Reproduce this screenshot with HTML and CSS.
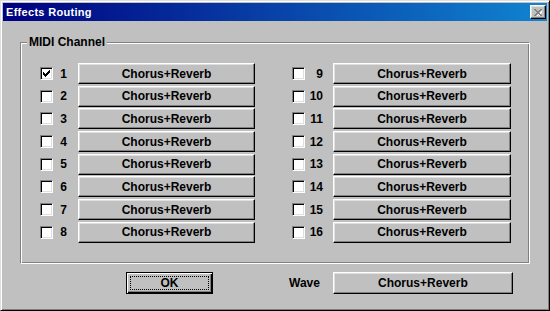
FILE: index.html
```html
<!DOCTYPE html>
<html lang="en">
<head>
    <meta charset="UTF-8">
    <title>Effects Routing</title>
    <link rel="stylesheet" href="styles.css">
</head>
<body>
    <div class="window">
        <div class="titlebar">
            <span class="title">Effects Routing</span>
            <button class="close-btn" disabled>
                <svg width="8" height="7" viewBox="0 0 8 7" shape-rendering="crispEdges">
                    <path d="M1 1h2v1h1v1h1V2h1V1h1v1H7v1H6v1H5v1h1v1h1v1H5V6H4V5H3v1H2v1H1V6h1V5h1V4h1V3H3V2H1z" fill="#fff" transform="translate(1 1)"/>
                    <path d="M0 0h2v1h1v1h2V1h1V0h2v1H7v1H6v1H5v1h1v1h1v1h1v1H6V6H5V5H3v1H2v1H0V6h1V5h1V4h1V3H2V2H1V1H0z" fill="#808080"/>
                </svg>
            </button>
        </div>

        <div class="group">
            <span class="legend">MIDI Channel</span>
            <div class="channels">
                <div class="column">
                    <div class="row"><span class="check checked"></span><span class="num">1</span><button class="btn">Chorus+Reverb</button></div>
                    <div class="row"><span class="check"></span><span class="num">2</span><button class="btn">Chorus+Reverb</button></div>
                    <div class="row"><span class="check"></span><span class="num">3</span><button class="btn">Chorus+Reverb</button></div>
                    <div class="row"><span class="check"></span><span class="num">4</span><button class="btn">Chorus+Reverb</button></div>
                    <div class="row"><span class="check"></span><span class="num">5</span><button class="btn">Chorus+Reverb</button></div>
                    <div class="row"><span class="check"></span><span class="num">6</span><button class="btn">Chorus+Reverb</button></div>
                    <div class="row"><span class="check"></span><span class="num">7</span><button class="btn">Chorus+Reverb</button></div>
                    <div class="row"><span class="check"></span><span class="num">8</span><button class="btn">Chorus+Reverb</button></div>
                </div>
                <div class="column right">
                    <div class="row"><span class="check"></span><span class="num">9</span><button class="btn">Chorus+Reverb</button></div>
                    <div class="row"><span class="check"></span><span class="num">10</span><button class="btn">Chorus+Reverb</button></div>
                    <div class="row"><span class="check"></span><span class="num">11</span><button class="btn">Chorus+Reverb</button></div>
                    <div class="row"><span class="check"></span><span class="num">12</span><button class="btn">Chorus+Reverb</button></div>
                    <div class="row"><span class="check"></span><span class="num">13</span><button class="btn">Chorus+Reverb</button></div>
                    <div class="row"><span class="check"></span><span class="num">14</span><button class="btn">Chorus+Reverb</button></div>
                    <div class="row"><span class="check"></span><span class="num">15</span><button class="btn">Chorus+Reverb</button></div>
                    <div class="row"><span class="check"></span><span class="num">16</span><button class="btn">Chorus+Reverb</button></div>
                </div>
            </div>
        </div>

        <div class="footer">
            <button class="ok-btn"><span class="focus">OK</span></button>
            <span class="wave-label">Wave</span>
            <button class="btn wave-btn">Chorus+Reverb</button>
        </div>
    </div>
</body>
</html>
```

FILE: styles.css
```css
body {
    margin: 0;
    background: #c0c0c0;
    font-family: 'Liberation Sans', Arial, sans-serif;
    font-size: 12px;
    font-weight: bold;
    color: #000;
}

.window {
    box-sizing: border-box;
    width: 550px;
    height: 311px;
    padding: 2px;
    background: #c0c0c0;
    border: 1px solid;
    border-color: #dfdfdf #000 #000 #dfdfdf;
    box-shadow: inset 1px 1px #fff, inset -1px -1px #808080;
}

.titlebar {
    display: flex;
    align-items: center;
    justify-content: space-between;
    height: 18px;
    padding: 0 1px 0 3px;
    background: linear-gradient(to right, #000080, #1084d0);
}

.title {
    color: #fff;
    font-size: 11px;
    letter-spacing: 0.3px;
}

.close-btn {
    display: flex;
    align-items: center;
    justify-content: center;
    box-sizing: border-box;
    width: 16px;
    height: 14px;
    padding: 0;
    background: #c0c0c0;
    border: 1px solid;
    border-color: #fff #000 #000 #fff;
    box-shadow: inset -1px -1px #808080, inset 1px 1px #dfdfdf;
}

.group {
    position: relative;
    box-sizing: border-box;
    width: 510px;
    height: 222px;
    margin: 21px 0 0 17px;
    padding: 20px 0 0 19px;
    border: 1px solid;
    border-color: #808080 #fff #fff #808080;
    box-shadow: inset 1px 1px #fff, inset -1px -1px #808080;
}

.legend {
    position: absolute;
    top: -8px;
    left: 6px;
    padding: 0 2px;
    background: #c0c0c0;
    line-height: 15px;
}

.channels {
    display: flex;
    gap: 37px;
}

.column {
    display: grid;
    grid-template-rows: repeat(8, 21px);
    row-gap: 1.7px;
}

.row {
    display: flex;
    align-items: center;
}

.check {
    box-sizing: border-box;
    width: 13px;
    height: 13px;
    background: #fff;
    border: 1px solid;
    border-color: #808080 #fff #fff #808080;
    box-shadow: inset 1px 1px #000, inset -1px -1px #dfdfdf;
}

.check.checked {
    background: #fff url("data:image/svg+xml,%3Csvg xmlns='http://www.w3.org/2000/svg' width='7' height='7' shape-rendering='crispEdges'%3E%3Cpath d='M6 0h1v3H6v1H5v1H4v1H3v1H2V6H1V5H0V2h1v1h1v1h1V3h1V2h1V1h1z'/%3E%3C/svg%3E") no-repeat 2px 2px;
}

.num {
    width: 14px;
    text-align: right;
}

.right .num {
    width: 18px;
}

.btn {
    box-sizing: border-box;
    height: 21px;
    margin-left: 11px;
    width: 177px;
    padding: 0;
    background: #c0c0c0;
    font: inherit;
    color: #000;
    border: 1px solid;
    border-color: #fff #000 #000 #fff;
    box-shadow: inset -1px -1px #808080, inset 1px 1px #dfdfdf;
}

.right .btn {
    margin-left: 10px;
    width: 178px;
}

.footer {
    display: flex;
    align-items: center;
    margin-top: 8px;
    padding-left: 123px;
}

.ok-btn {
    box-sizing: border-box;
    width: 87px;
    height: 22px;
    padding: 3px;
    background: #c0c0c0;
    font: inherit;
    color: #000;
    border: 1px solid #000;
    box-shadow: inset 1px 1px #fff, inset -1px -1px #000, inset -2px -2px #808080;
}

.focus {
    display: block;
    height: 100%;
    box-sizing: border-box;
    border: 1px dotted #000;
    line-height: 12px;
}

.wave-label {
    margin-left: 76px;
}

.wave-btn {
    height: 22px;
    width: 180px;
    margin-left: 13px;
}
```
